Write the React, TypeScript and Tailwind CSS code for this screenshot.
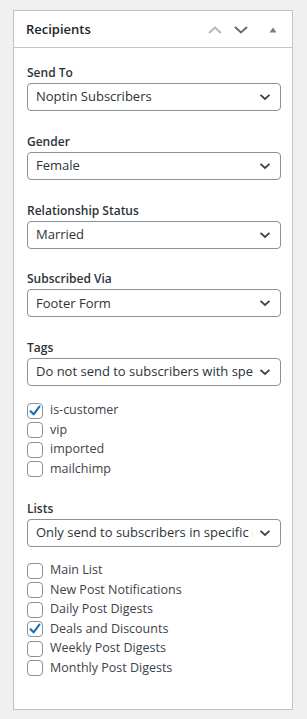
import React from "react";

const font = { fontFamily: '"Open Sans", "Noto Sans", sans-serif' };

function Chevron() {
  return (
    <svg width="12" height="8" viewBox="0 0 12 8" className="shrink-0">
      <path d="M1.5 1.8 L6 6 L10.5 1.8" fill="none" stroke="#3c434a" strokeWidth="1.8" />
    </svg>
  );
}

function Select({ value }: { value: string }) {
  return (
    <div className="flex h-[28px] items-center rounded-[4px] border border-[#8c8f94] bg-white pl-[8px] pr-[9px]">
      <span className="min-w-0 flex-1 overflow-hidden whitespace-nowrap text-[13px] text-[#2c3338]">{value}</span>
      <span className="ml-[6px]"><Chevron /></span>
    </div>
  );
}

function Field({ label, value }: { label: string; value: string }) {
  return (
    <div className="flex flex-col">
      <div className="mb-[1px] text-[12px] font-semibold leading-[18px] text-[#2c3338]">{label}</div>
      <Select value={value} />
    </div>
  );
}

function Box({ checked }: { checked?: boolean }) {
  return (
    <span className="flex h-[16px] w-[16px] shrink-0 items-center justify-center rounded-[4px] border border-[#8c8f94] bg-white">
      {checked && (
        <svg width="14" height="14" viewBox="0 0 14 14">
          <path d="M2.6 7.2 L5.6 10.3 L11.4 2.6" fill="none" stroke="#2271b1" strokeWidth="2.2" strokeLinecap="round" strokeLinejoin="round" />
        </svg>
      )}
    </span>
  );
}

function Checks({ items }: { items: [string, boolean][] }) {
  return (
    <div className="flex flex-col">
      {items.map(([t, c]) => (
        <div key={t} className="flex h-[19.5px] items-center gap-[7px]">
          <Box checked={c} />
          <span className="text-[12.5px] text-[#3c434a]">{t}</span>
        </div>
      ))}
    </div>
  );
}

export default function App() {
  return (
    <div style={font} className="min-h-[719px] w-[307px] bg-[#f0f0f1] pt-[10px]">
      <div className="ml-[13px] flex h-[700px] w-[280px] flex-col border border-[#c3c4c7] bg-white">
        <div className="flex h-[37px] shrink-0 items-center border-b border-[#c3c4c7] pl-[12px] pt-[2px]">
          <span className="flex-1 text-[13px] font-semibold text-[#1d2327]">Recipients</span>
          <div className="flex items-center">
            <svg width="14" height="8" viewBox="0 0 14 8" className="mr-[12px]">
              <path d="M1 7 L7 1.5 L13 7" fill="none" stroke="#b4b7ba" strokeWidth="2" />
            </svg>
            <svg width="14" height="8" viewBox="0 0 14 8" className="mr-[21px]">
              <path d="M1 1 L7 6.5 L13 1" fill="none" stroke="#646970" strokeWidth="2" />
            </svg>
            <svg width="8" height="6" viewBox="0 0 8 6" className="mr-[15px]">
              <path d="M0.5 5.5 L4 0.5 L7.5 5.5 Z" fill="#787c82" />
            </svg>
          </div>
        </div>
        <div className="flex flex-col pl-[13px] pr-[11px] pt-[16px]">
          <div className="flex flex-col gap-[21.75px]">
            <Field label="Send To" value="Noptin Subscribers" />
            <Field label="Gender" value="Female" />
            <Field label="Relationship Status" value="Married" />
            <Field label="Subscribed Via" value="Footer Form" />
            <Field label="Tags" value="Do not send to subscribers with specific tags" />
          </div>
          <div className="mt-[15px]">
            <Checks items={[["is-customer", true], ["vip", false], ["imported", false], ["mailchimp", false]]} />
          </div>
          <div className="mt-[21px]">
            <Field label="Lists" value="Only send to subscribers in specific lists" />
          </div>
          <div className="mt-[14px]">
            <Checks
              items={[
                ["Main List", false],
                ["New Post Notifications", false],
                ["Daily Post Digests", false],
                ["Deals and Discounts", true],
                ["Weekly Post Digests", false],
                ["Monthly Post Digests", false],
              ]}
            />
          </div>
        </div>
      </div>
    </div>
  );
}
